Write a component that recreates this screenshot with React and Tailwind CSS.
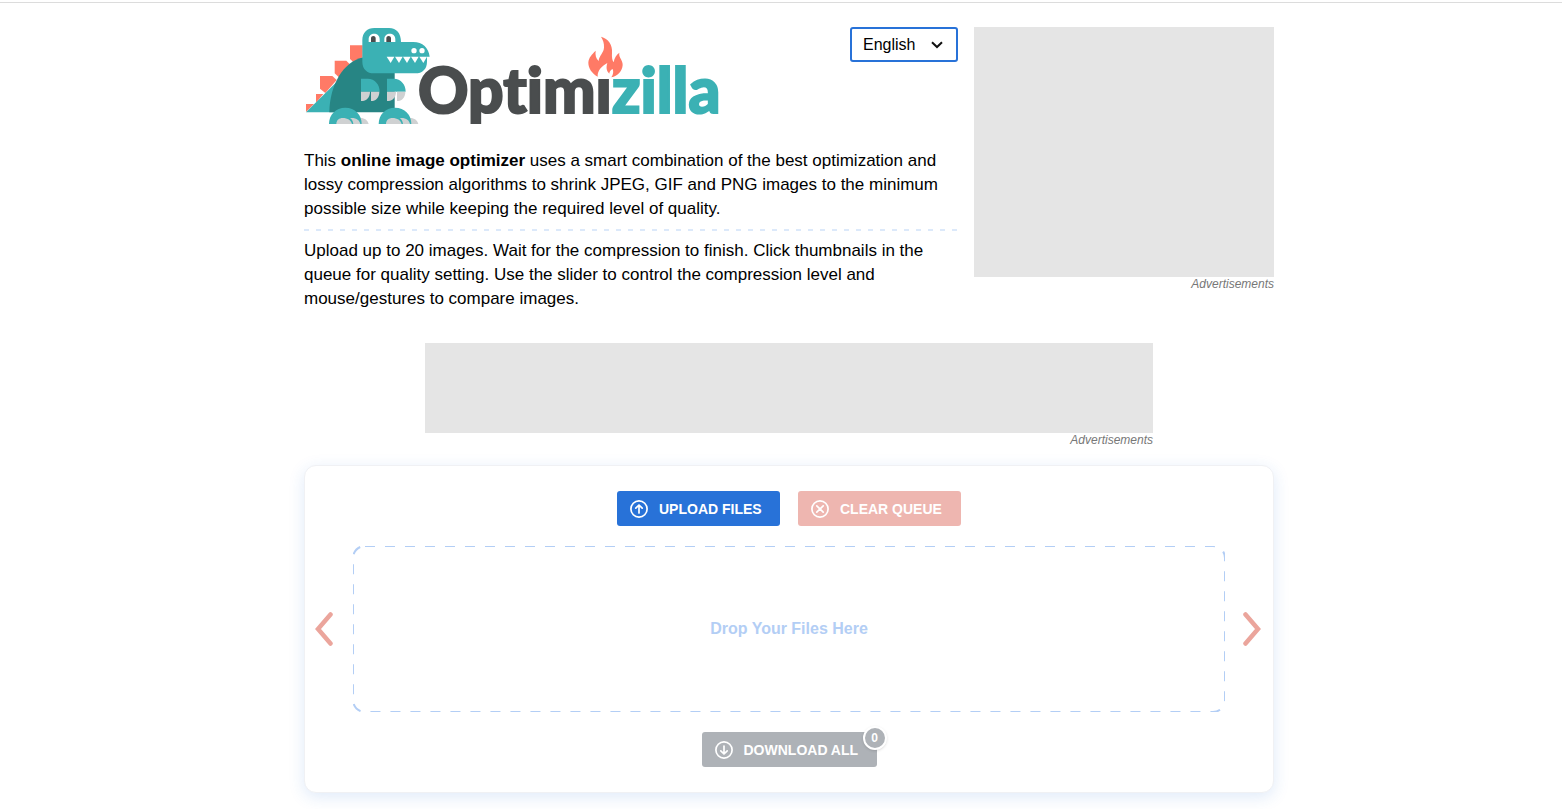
import React from 'react';

const LANGUAGES = ['English', 'Deutsch', 'Español', 'Français', 'Italiano', 'Português'];

const TEETH = [260, 285, 309, 333, 358];

function Logo() {
  return (
    <svg viewBox="12 21 1260 300" className="w-[420px] h-[100px] max-w-full" role="img" aria-label="Optimizilla">
      {/* spikes */}
      <g fill="#ff7a66">
        <path d="M150 76H188V112L160 126L150 117Z" />
        <path d="M104 122H139L151 134L119 174L104 160Z" />
        <path d="M60 168H97L110 180L76 219L60 206Z" />
        <path d="M48 222H70L50 246H48Z" />
        <path d="M18 252H42L18 276Z" />
      </g>
      {/* body and tail */}
      <path d="M18 277L112 184L130 277Z" fill="#3bb1b4" />
      <path d="M88 277C89 195 130 125 190 112L284 155V277Z" fill="#278584" />
      {/* arms */}
      {[0, 78].map((dx) => (
        <g key={dx} transform={`translate(${dx} 0)`}>
          <path d="M183 176H203C225 176 239 194 239 215H183Z" fill="#3bb1b4" />
          <path d="M213 215H238C238 232 228 243 213 243Z" fill="#cfd1d2" />
          <path d="M183 215H210C210 232 200 243 183 243Z" fill="#cfd1d2" />
        </g>
      ))}
      {/* feet */}
      {[0, 149].map((dx) => (
        <g key={dx} transform={`translate(${dx} 0)`}>
          <path d="M166 312C166 300 174 294 182 294C194 294 203 301 206 312Z" fill="#cfd1d2" />
          <path d="M87 312C87 284 107 263 136 263C165 263 185 284 185 312Z" fill="#3bb1b4" />
          <path d="M150 294C168 292 179 300 181 312H160C159 304 156 298 150 294Z" fill="#cfd1d2" />
          <path d="M109 312C109 300 118 294 128 294C143 294 153 301 156 312Z" fill="#cfd1d2" />
        </g>
      ))}
      {/* head */}
      <path d="M187 60C187 38 202 24 223 24H267C290 24 303 40 303 66H340C368 66 386 84 389 110H381V125C381 147 367 160 346 160H222C201 160 187 147 187 125Z" fill="#3bb1b4" />
      <path d="M206 66V58C206 36 239 36 239 58V66ZM253 66V58C253 36 286 36 286 58V66Z" fill="#fff" />
      <path d="M213 66V55C213 46 227 46 227 55V66ZM259 66V55C259 46 273 46 273 55V66Z" fill="#4a4d4e" />
      <circle cx="342" cy="92" r="8" fill="#fff" />
      <circle cx="366" cy="92" r="8" fill="#fff" />
      {TEETH.map((x) => (
        <path key={x} d={`M${x} 110h23l-11 19z`} fill="#fff" />
      ))}
      {/* wordmark */}
      <text
        x="354"
        y="278"
        fontFamily="Lato, sans-serif"
        fontWeight="900"
        fontSize="187"
        strokeWidth="6"
        fill="#4a4d4e"
        stroke="#4a4d4e"
        style={{ fontVariantLigatures: 'none' }}
      >
        Optimi<tspan fill="#3bb1b4" stroke="#3bb1b4">zilla</tspan>
      </text>
      {/* flame takes the place of the dot */}
      <path d="M884 130H941V176H884Z" fill="#fff" />
      <path
        d="M903 50C925 56 938 74 936 98C935 112 937 122 941 127C943 114 949 104 958 98C955 112 969 120 968 135C967 153 953 168 934 172C940 163 941 155 938 147C932 150 928 155 928 161C919 153 918 142 922 129C906 138 892 150 893 170C876 160 865 145 865 128C866 112 876 103 887 92C885 105 888 116 896 123C897 108 912 98 912 82C913 70 909 60 903 50Z"
        fill="#ff7a66"
      />
    </svg>
  );
}

function CircleIcon({ children }) {
  return (
    <svg viewBox="0 0 18 18" className="w-[18px] h-[18px] shrink-0" fill="none" stroke="currentColor" strokeWidth="1.7" strokeLinecap="round" strokeLinejoin="round" aria-hidden="true">
      <circle cx="9" cy="9" r="8.1" />
      {children}
    </svg>
  );
}

function AdSlot({ className, boxClassName }) {
  return (
    <div className={className}>
      <div className={boxClassName} />
      <p className="text-right text-xs leading-[14px] italic text-[#777]">Advertisements</p>
    </div>
  );
}

const BUTTON = 'relative flex items-center gap-[11px] h-[35px] pl-[13px] rounded-[3px] text-sm font-bold uppercase text-white';

export default function App() {
  return (
    <div className="bg-white pt-0.5 font-['Liberation_Sans',Arial,sans-serif] text-base text-black">
      <div className="border-t border-[#dcdcdc] pl-4 pt-6 pb-4">
        <div className="mx-auto w-full max-w-[970px]">
          <header className="flex flex-wrap md:flex-nowrap gap-4">
            <div className="flex-1 min-w-0">
              <div className="flex items-start justify-between">
                <h1><Logo /></h1>
                <div className="relative shrink-0">
                  <select
                    aria-label="Language"
                    defaultValue="English"
                    className="appearance-none block w-[108px] h-[35px] pl-[11px] pr-8 rounded-[3px] border-2 border-[#2872d8] bg-white"
                  >
                    {LANGUAGES.map((lang) => (
                      <option key={lang}>{lang}</option>
                    ))}
                  </select>
                  <svg viewBox="0 0 12 8" className="absolute right-[15px] top-[14px] w-3 h-2 pointer-events-none" fill="none" stroke="#111" strokeWidth="2" aria-hidden="true">
                    <path d="M1 1.2L6 6L11 1.2" />
                  </svg>
                </div>
              </div>

              <p className="mt-[22px] text-[17px] leading-6">
                This <strong>online image optimizer</strong> uses a smart combination of the best optimization and
                lossy compression algorithms to shrink JPEG, GIF and PNG images to the minimum
                possible size while keeping the required level of quality.
              </p>
              <hr className="my-2 h-0.5 border-0 bg-[repeating-linear-gradient(90deg,#dce9fa_0_5px,transparent_5px_12px)]" />
              <p className="text-[17px] leading-6">
                Upload up to 20 images. Wait for the compression to finish. Click thumbnails in the
                queue for quality setting. Use the slider to control the compression level and
                mouse/gestures to compare images.
              </p>
            </div>
            <AdSlot className="w-[300px] shrink-0" boxClassName="h-[250px] bg-[#e5e5e5]" />
          </header>

          <AdSlot className="mx-auto mt-8 max-w-[728px]" boxClassName="h-[90px] bg-[#e5e5e5]" />

          <main className="mt-[18px] flex flex-col items-center gap-5 py-[25px] rounded-xl border border-[#f0f1f4] bg-white shadow-[0_4px_16px_rgba(40,114,216,0.15)]">
            <div className="flex gap-[18px]">
              <button type="button" className={`${BUTTON} w-[163px] bg-[#2872d8]`}>
                <CircleIcon><path d="M9 13V5.2M5.8 8.2L9 5L12.2 8.2" /></CircleIcon>
                Upload files
              </button>
              <button type="button" className={`${BUTTON} w-[163px] bg-[#eeb6b0]`}>
                <CircleIcon><path d="M5.8 5.8L12.2 12.2M12.2 5.8L5.8 12.2" /></CircleIcon>
                Clear queue
              </button>
            </div>

            <div className="flex w-full items-center pl-[10px] pr-3">
              <button type="button" aria-label="Previous" className="w-[18px]">
                <svg viewBox="0 0 18 34" className="w-[18px] h-[34px]" fill="none" stroke="#eba59c" strokeWidth="4.5" strokeLinecap="round">
                  <path d="M15.5 2.5L3 17L15.5 31.5" />
                </svg>
              </button>
              <div className="relative ml-5 mr-[18px] flex h-[166px] flex-1 items-center justify-center">
                <svg className="absolute inset-0 w-full h-full" aria-hidden="true">
                  <rect width="100%" height="100%" rx="12" fill="none" stroke="#b3cef5" strokeWidth="2" strokeDasharray="10 10" />
                </svg>
                <p className="font-bold text-[#b3cef5]">Drop Your Files Here</p>
              </div>
              <button type="button" aria-label="Next" className="w-[18px]">
                <svg viewBox="0 0 18 34" className="w-[18px] h-[34px]" fill="none" stroke="#eba59c" strokeWidth="4.5" strokeLinecap="round">
                  <path d="M2.5 2.5L15 17L2.5 31.5" />
                </svg>
              </button>
            </div>

            <button type="button" className={`${BUTTON} w-[175px] bg-[#aeb2b7]`}>
              <CircleIcon><path d="M9 5V12.8M5.8 9.8L9 13L12.2 9.8" /></CircleIcon>
              Download all
              <span className="absolute -right-[10px] -top-[6px] flex w-6 h-6 items-center justify-center rounded-full border-2 border-white bg-[#aeb2b7] text-xs shadow">
                0
              </span>
            </button>
          </main>
        </div>
      </div>
    </div>
  );
}
